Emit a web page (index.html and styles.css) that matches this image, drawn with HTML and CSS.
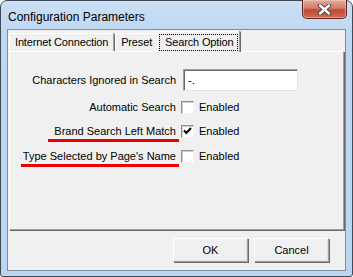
FILE: index.html
```html
<!DOCTYPE html>
<html lang="en">
<head>
    <meta charset="utf-8">
    <title>Configuration Parameters</title>
    <link rel="stylesheet" href="styles.css">
</head>
<body>
    <div class="window">
        <div class="titlebar">
            <span class="title">Configuration Parameters</span>
            <button class="close" title="Close">
                <svg width="17" height="11" viewBox="0 0 17 11">
                    <path d="M4 1.5 L13 9.5 M13 1.5 L4 9.5" stroke="#3c3c44" stroke-width="4.2" stroke-linecap="round"/>
                    <path d="M4 1.5 L13 9.5 M13 1.5 L4 9.5" stroke="#fff" stroke-width="2.4" stroke-linecap="round"/>
                </svg>
            </button>
        </div>
        <div class="client">
            <div class="tabs">
                <div class="tab">Internet Connection</div>
                <div class="tab">Preset</div>
                <div class="tab active"><span class="focus">Search Option</span></div>
            </div>
            <div class="panel">
                <div class="row first">
                    <span class="label">Characters Ignored in Search</span>
                    <div class="textbox">-.</div>
                </div>
                <div class="row">
                    <span class="label">Automatic Search</span>
                    <span class="check"></span>
                    <span class="opt">Enabled</span>
                </div>
                <div class="row">
                    <span class="label marked">Brand Search Left Match</span>
                    <span class="check">
                        <svg width="11" height="11" viewBox="0 0 11 11">
                            <path d="M2 4.5 L4.3 7 L9 2" fill="none" stroke="#000" stroke-width="2"/>
                        </svg>
                    </span>
                    <span class="opt">Enabled</span>
                </div>
                <div class="row last">
                    <span class="label marked">Type Selected by Page's Name</span>
                    <span class="check"></span>
                    <span class="opt">Enabled</span>
                </div>
            </div>
            <div class="buttons">
                <button class="btn">OK</button>
                <button class="btn">Cancel</button>
            </div>
        </div>
    </div>
</body>
</html>
```
FILE: styles.css
```css
* {
    box-sizing: border-box;
    margin: 0;
    padding: 0;
}

body {
    background-color: #ffffff;
    font-family: "Liberation Sans", Arial, sans-serif;
    font-size: 11px;
    color: #000;
}

.window {
    width: 353px;
    height: 277px;
    display: flex;
    flex-direction: column;
    border: 1px solid #404a56;
    border-radius: 7px 7px 3px 3px;
    background: linear-gradient(#cbe0f6, #bfd7f1 30px, #bcd6f2);
    padding: 0 6px 5px 6px;
}

.titlebar {
    height: 28px;
    display: flex;
    align-items: flex-start;
    justify-content: space-between;
}

.titlebar .title {
    font-size: 12px;
    margin-top: 9px;
    margin-left: 1px;
    color: #000;
}

.titlebar .close {
    width: 45px;
    height: 19px;
    margin-top: -1px;
    border: 1px solid #5b2620;
    border-top: 0;
    border-radius: 0 0 5px 5px;
    background: linear-gradient(#e5a99b, #d47d6b 45%, #c14a34 55%, #cf6a52);
    box-shadow: inset 0 0 0 1px rgba(255, 220, 210, .45);
    display: flex;
    align-items: center;
    justify-content: center;
    margin-right: -1px;
}

.client {
    flex-grow: 1;
    background-color: #f0f0f0;
    border: 1px solid #7e8ea1;
    padding: 1px 0 0 1px;
    display: flex;
    flex-direction: column;
}

.tabs {
    display: flex;
    align-items: flex-end;
    height: 20px;
    padding-left: 0;
}

.tab {
    height: 18px;
    padding: 0 5px;
    line-height: 17px;
    letter-spacing: -0.15px;
    border: 1px solid #fff;
    border-right-color: #a0a0a0;
    border-bottom: 0;
    box-shadow: 1px 0 0 #696969;
    margin-right: 1px;
    border-radius: 2px 2px 0 0;
}

.tab.active {
    height: 21px;
    margin: 0 -1px -1px -2px;
    padding: 2px 1px 0 1px;
    background-color: #f0f0f0;
    position: relative;
    z-index: 1;
    line-height: 15px;
}

.tab.active .focus {
    display: block;
    border: 1px dotted #000;
    padding: 0 4px 0 5px;
    height: 17px;
}

.panel {
    height: 179px;
    margin-right: 1px;
    border: 1px solid #fff;
    border-right-color: #a0a0a0;
    border-bottom-color: #a0a0a0;
    box-shadow: 1px 1px 0 #696969;
    padding-top: 17px;
    display: flex;
    flex-direction: column;
}

.row {
    display: flex;
    align-items: center;
    height: 24px;
}

.row.first {
    height: 22px;
    margin-bottom: 4px;
}

.row.last {
    margin-top: 1px;
}

.label {
    width: 166px;
    text-align: right;
    line-height: 13px;
    position: relative;
}

.label.marked::after {
    content: "";
    position: absolute;
    right: -3px;
    top: 14px;
    height: 3px;
    background-color: #ee0000;
}

.row:nth-child(3) .label.marked::after {
    width: 131px;
}

.row:nth-child(4) .label.marked::after {
    width: 158px;
}

.textbox {
    margin-left: 7px;
    width: 115px;
    height: 22px;
    background-color: #fff;
    border: 1px solid #a0a0a0;
    border-right-color: #e3e3e3;
    border-bottom-color: #e3e3e3;
    box-shadow: inset 1px 1px 0 #696969;
    padding: 4px 0 0 4px;
    line-height: 13px;
}

.check {
    margin-left: 5px;
    width: 13px;
    height: 13px;
    background-color: #fff;
    border: 1px solid #8f8f8f;
    border-right-color: #f4f4f4;
    border-bottom-color: #f4f4f4;
    box-shadow: inset 1px 1px 0 #d0d0d0;
    display: flex;
    align-items: center;
    justify-content: center;
}

.opt {
    margin-left: 5px;
}

.buttons {
    display: flex;
    justify-content: flex-end;
    gap: 6px;
    padding: 8px 16px 0 0;
}

.btn {
    width: 75px;
    height: 24px;
    font-family: "Liberation Sans", Arial, sans-serif;
    font-size: 11px;
    color: #000;
    background-color: #f0f0f0;
    border: 1px solid #fff;
    border-right-color: #a0a0a0;
    border-bottom-color: #a0a0a0;
    box-shadow: 1px 1px 0 #696969, inset -1px -1px 0 #e3e3e3;
}
```
